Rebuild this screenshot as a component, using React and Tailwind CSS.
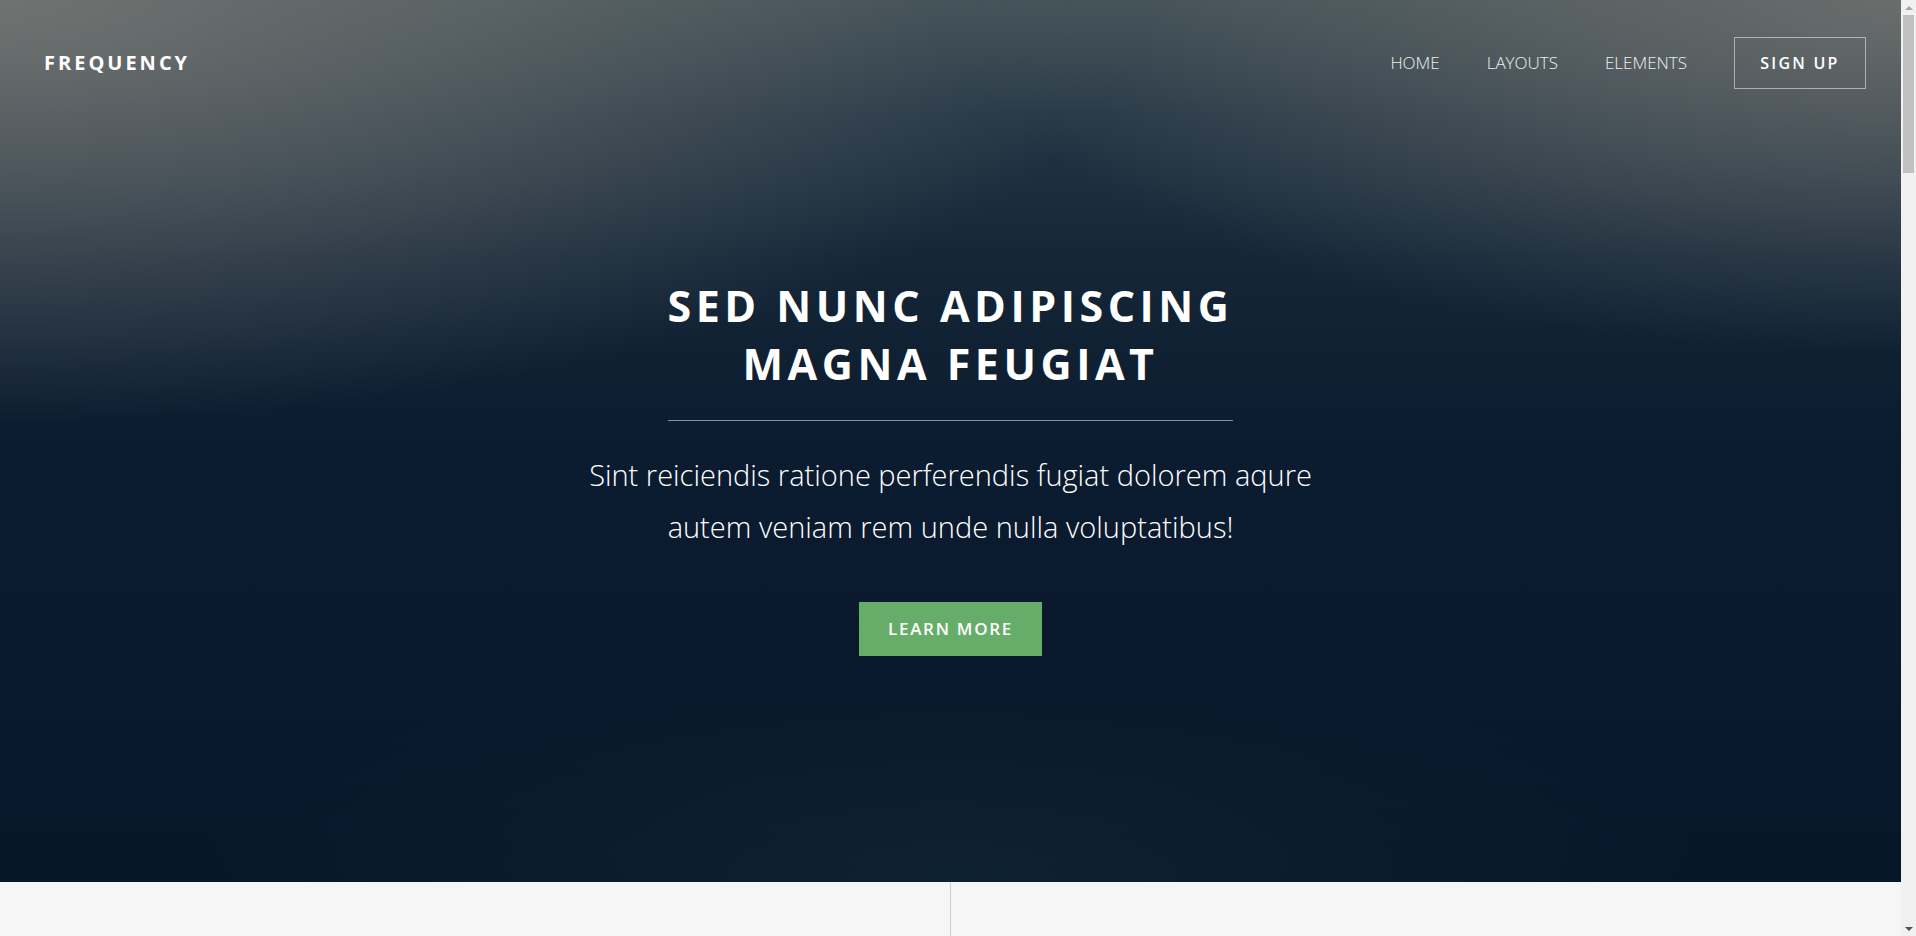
export default function App() {
  const nav = ['HOME', 'LAYOUTS', 'ELEMENTS'];

  return (
    <div className="min-h-screen w-[1901px] bg-[#f6f6f6] font-['Open_Sans','Liberation_Sans',sans-serif] text-white">
      {/* Banner */}
      <section className="relative h-[882px] flex flex-col bg-[radial-gradient(ellipse_60%_48%_at_0%_0%,rgba(114,116,114,0.95),rgba(114,116,114,0)_100%),radial-gradient(ellipse_50%_40%_at_100%_0%,rgba(110,112,110,0.9),rgba(110,112,110,0)_100%),radial-gradient(ellipse_40%_25%_at_50%_100%,rgba(18,40,54,0.6),rgba(18,40,54,0)_100%),linear-gradient(180deg,#3d4e55_0%,#243645_13%,#142638_29%,#0c1c30_50%,#08162a_100%)]">
        {/* Header */}
        <header className="h-[126px] shrink-0 flex items-center justify-between pl-[44px] pr-[35px]">
          <a href="#" className="text-[20px] font-bold tracking-[0.15em] leading-none">
            FREQUENCY
          </a>
          <nav className="flex items-center">
            {nav.map(item => (
              <a key={item} href="#" className="mr-[47px] text-[17px] font-light text-white/90">
                {item}
              </a>
            ))}
            <a
              href="#"
              className="w-[132px] h-[52px] flex items-center justify-center border border-white/50 text-[16px] font-semibold tracking-[0.14em]"
            >
              SIGN UP
            </a>
          </nav>
        </header>

        {/* Contenido */}
        <div className="flex flex-col items-center text-center mt-[151px]">
          <h2 className="inline-block text-[43px] leading-[58px] font-bold tracking-[0.105em] pb-[27px] border-b border-white/50">
            SED NUNC ADIPISCING
            <br />
            MAGNA FEUGIAT
          </h2>
          <p className="mt-[28px] max-w-[760px] text-[29px] leading-[52px] font-light">
            Sint reiciendis ratione perferendis fugiat dolorem aqure autem veniam rem unde nulla voluptatibus!
          </p>
          <a
            href="#"
            className="mt-[49px] w-[183px] h-[54px] flex items-center justify-center bg-[#66ad6a] text-[17px] font-semibold tracking-[0.1em]"
          >
            LEARN MORE
          </a>
        </div>
      </section>

      {/* Sección inferior */}
      <section className="grid grid-cols-2 h-[4485px] text-[#666]">
        <div className="border-r border-[#d0d0d0]" />
        <div />
      </section>

      {/* Barra de desplazamiento */}
      <div className="fixed top-0 right-0 w-[15px] h-[936px] bg-[#f1f1f1] flex flex-col items-center">
        <div className="h-[15px] flex items-center justify-center">
          <div className="w-0 h-0 border-l-[4px] border-r-[4px] border-b-[4px] border-l-transparent border-r-transparent border-b-[#a3a3a3]" />
        </div>
        <div className="w-[11px] h-[158px] bg-[#c1c1c1]" />
        <div className="flex-1" />
        <div className="h-[15px] flex items-center justify-center">
          <div className="w-0 h-0 border-l-[4px] border-r-[4px] border-t-[4px] border-l-transparent border-r-transparent border-t-[#505050]" />
        </div>
      </div>
    </div>
  );
}
